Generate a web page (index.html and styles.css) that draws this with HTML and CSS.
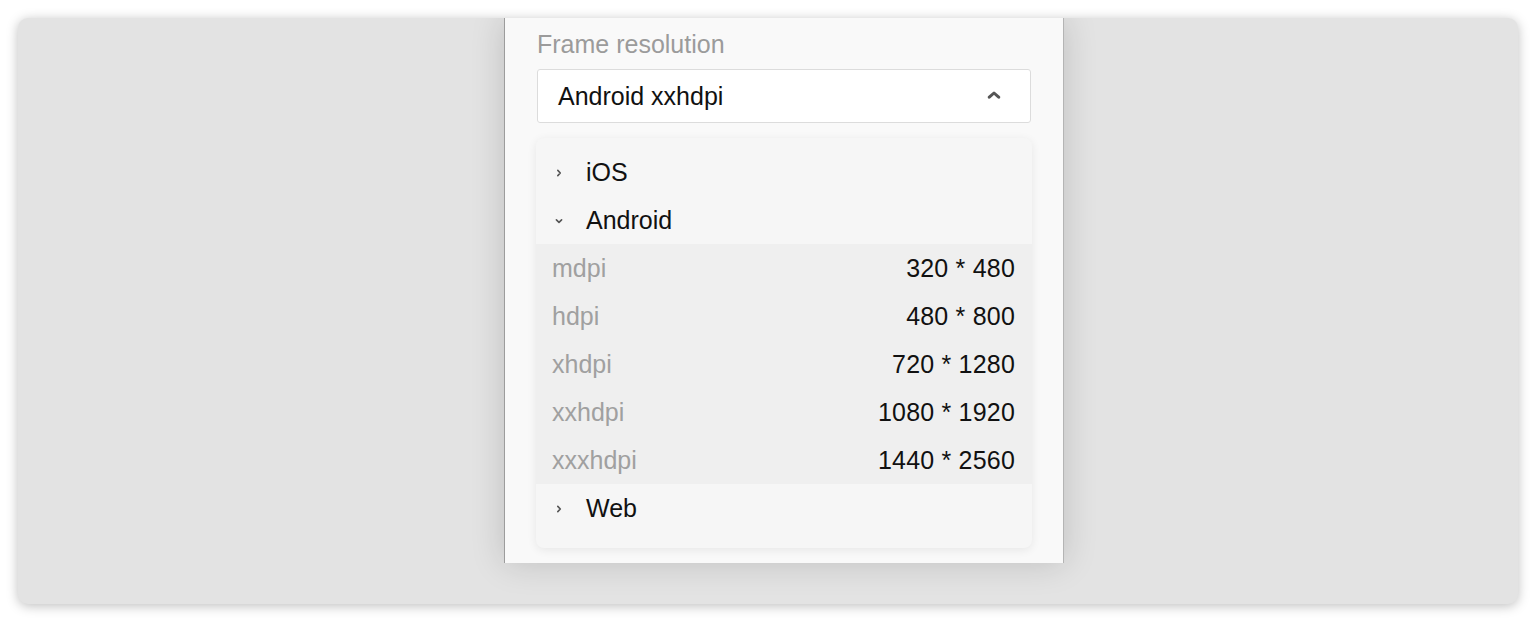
FILE: index.html
```html
<!DOCTYPE html>
<html>
<head>
<meta charset="utf-8">
<link rel="stylesheet" href="styles.css">
</head>
<body>
<div class="frame">
  <div class="panel">
    <div class="label">Frame resolution</div>
    <div class="select">
      <span class="select-value">Android xxhdpi</span>
      <svg class="caret" width="14" height="8" viewBox="0 0 14 8"><path d="M2.3 6.2 L7 2 L11.7 6.2" fill="none" stroke="#555" stroke-width="3" stroke-linecap="round" stroke-linejoin="round"/></svg>
    </div>
    <div class="menu">
      <div class="cat">
        <span class="arrow"><svg width="6" height="8" viewBox="0 0 6 8"><path d="M1.8 1.4 L4.3 4 L1.8 6.6" fill="none" stroke="#555" stroke-width="1.6" stroke-linecap="round" stroke-linejoin="round"/></svg></span>
        <span class="cat-name">iOS</span>
      </div>
      <div class="cat">
        <span class="arrow"><svg width="8" height="6" viewBox="0 0 8 6"><path d="M1.4 1.8 L4 4.3 L6.6 1.8" fill="none" stroke="#555" stroke-width="1.6" stroke-linecap="round" stroke-linejoin="round"/></svg></span>
        <span class="cat-name">Android</span>
      </div>
      <div class="sub">
        <div class="opt"><span class="opt-name">mdpi</span><span class="opt-val">320 * 480</span></div>
        <div class="opt"><span class="opt-name">hdpi</span><span class="opt-val">480 * 800</span></div>
        <div class="opt"><span class="opt-name">xhdpi</span><span class="opt-val">720 * 1280</span></div>
        <div class="opt"><span class="opt-name">xxhdpi</span><span class="opt-val">1080 * 1920</span></div>
        <div class="opt"><span class="opt-name">xxxhdpi</span><span class="opt-val">1440 * 2560</span></div>
      </div>
      <div class="cat">
        <span class="arrow"><svg width="6" height="8" viewBox="0 0 6 8"><path d="M1.8 1.4 L4.3 4 L1.8 6.6" fill="none" stroke="#555" stroke-width="1.6" stroke-linecap="round" stroke-linejoin="round"/></svg></span>
        <span class="cat-name">Web</span>
      </div>
    </div>
  </div>
</div>
</body>
</html>
```
FILE: styles.css
```css
html, body {
  margin: 0;
  padding: 0;
  background: #ffffff;
}
body {
  font-family: "Liberation Sans", Arial, sans-serif;
  font-size: 25px;
  color: #111;
}
.frame {
  margin: 18px;
  width: 1500px;
  height: 586px;
  box-sizing: border-box;
  background: #e3e3e3;
  border-radius: 10px;
  box-shadow: 0 2px 12px rgba(0, 0, 0, 0.26);
  overflow: hidden;
  display: flex;
  align-items: flex-start;
  padding-left: 486px;
}
.panel {
  width: 560px;
  height: 545px;
  box-sizing: border-box;
  background: #f9f9f9;
  border-left: 1px solid #9c9c9c;
  border-right: 1px solid #b4b4b4;
  box-shadow: 0 0 32px rgba(0, 0, 0, 0.16);
  padding: 11px 32px 0 32px;
  display: flex;
  flex-direction: column;
}
.label {
  line-height: 30px;
  color: #9b9b9b;
}
.select {
  margin-top: 10px;
  height: 54px;
  box-sizing: border-box;
  background: #ffffff;
  border: 1px solid #dcdcdc;
  border-radius: 3px;
  display: flex;
  align-items: center;
  justify-content: space-between;
  padding: 0 29px 0 20px;
}
.select-value {
  line-height: 30px;
  color: #111;
}
.caret {
  display: block;
  margin-top: -2px;
}
.menu {
  margin: 15px -1px 0 -1px;
  background: #f6f6f6;
  border-radius: 8px;
  box-shadow: 0 2px 10px rgba(0, 0, 0, 0.08);
  padding: 10px 0 16px 0;
  overflow: hidden;
}
.cat {
  height: 48px;
  display: flex;
  align-items: center;
  padding-left: 18px;
}
.arrow {
  width: 10px;
  display: flex;
  justify-content: center;
  align-items: center;
  margin-top: 2px;
}
.arrow svg {
  display: block;
}
.cat-name {
  margin-left: 22px;
  line-height: 30px;
  color: #111;
}
.sub {
  background: #efefef;
}
.opt {
  height: 48px;
  display: flex;
  align-items: center;
  justify-content: space-between;
  padding: 0 17px 0 16px;
}
.opt-name {
  color: #a0a0a0;
}
.opt-val {
  color: #111;
  letter-spacing: 0.2px;
}
```
